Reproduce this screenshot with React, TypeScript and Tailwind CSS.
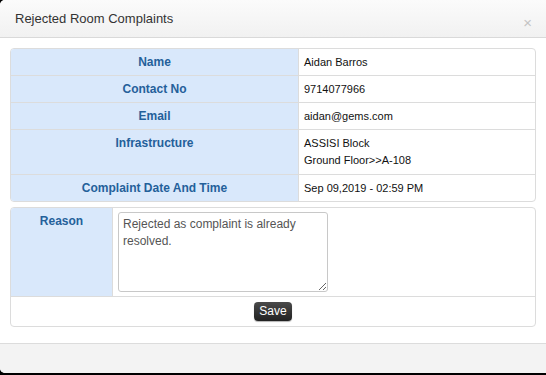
import React from 'react';

const rows = [
  { label: 'Name', value: ['Aidan Barros'] },
  { label: 'Contact No', value: ['9714077966'] },
  { label: 'Email', value: ['aidan@gems.com'] },
  { label: 'Infrastructure', value: ['ASSISI Block', 'Ground Floor>>A-108'] },
  { label: 'Complaint Date And Time', value: ['Sep 09,2019 - 02:59 PM'] },
];

export default function App() {
  return (
    <div className="w-[546px] h-[375px] bg-black overflow-hidden font-['Liberation_Sans',Arial,sans-serif]">
      <div className="h-[373px] bg-white rounded-l-[5px] flex flex-col">
        {/* Header */}
        <div className="h-[38px] shrink-0 flex items-center justify-between pl-[15px] pr-[14px] bg-gradient-to-b from-[#fbfbfb] to-[#f1f1f1] border-b border-[#d9d9d9] rounded-tl-[5px]">
          <h4 className="text-[13px] text-[#333] mt-[1px]">Rejected Room Complaints</h4>
          <span className="text-[15px] leading-none text-[#c4c4c4] mt-[8px]">×</span>
        </div>

        {/* Body */}
        <div className="flex-1 px-[10px] pt-[10px]">
          <div className="border border-[#dcdcdc] rounded-[4px] overflow-hidden">
            {rows.map((row, i) => (
              <div
                key={row.label}
                className={`grid grid-cols-[288px_1fr] ${i < rows.length - 1 ? 'border-b border-[#dcdcdc]' : ''}`}
              >
                <div
                  className={`bg-[#d9e8fb] border-r border-[#dcdcdc] text-center font-bold text-[12px] text-[#24609a] py-[5px] ${
                    row.value.length > 1 ? 'leading-[17px]' : 'leading-[16px]'
                  }`}
                >
                  {row.label}
                </div>
                <div
                  className={`px-[5px] py-[5px] text-[11px] text-[#111] ${
                    row.value.length > 1 ? 'leading-[17px]' : 'leading-[16px]'
                  }`}
                >
                  {row.value.map((v) => (
                    <div key={v}>{v}</div>
                  ))}
                </div>
              </div>
            ))}
          </div>

          <div className="mt-[5px] border border-[#dcdcdc] rounded-[4px] overflow-hidden">
            <div className="grid grid-cols-[102px_1fr] border-b border-[#dcdcdc]">
              <div className="bg-[#d9e8fb] border-r border-[#dcdcdc] text-center font-bold text-[12px] leading-[16px] text-[#24609a] py-[5px]">
                Reason
              </div>
              <div className="px-[5px] pt-[4px] pb-[4px]">
                <textarea
                  defaultValue="Rejected as complaint is already resolved."
                  className="block w-[210px] h-[80px] border border-[#c8c8c8] rounded-[3px] px-[4px] py-[3px] text-[12px] leading-[17px] text-[#555] font-['Liberation_Sans',Arial,sans-serif] resize-y outline-none"
                />
              </div>
            </div>
            <div className="h-[29px] flex items-start justify-center pt-[5px]">
              <button className="h-[19px] px-[5px] rounded-[4px] bg-gradient-to-b from-[#4a4a4a] to-[#222] text-white text-[12px] leading-[19px] shadow-[0_1px_1px_rgba(0,0,0,0.3)]">
                Save
              </button>
            </div>
          </div>
        </div>

        {/* Footer */}
        <div className="h-[30px] shrink-0 bg-[#f3f3f3] border-t border-[#dcdcdc] rounded-bl-[5px]" />
      </div>
    </div>
  );
}
